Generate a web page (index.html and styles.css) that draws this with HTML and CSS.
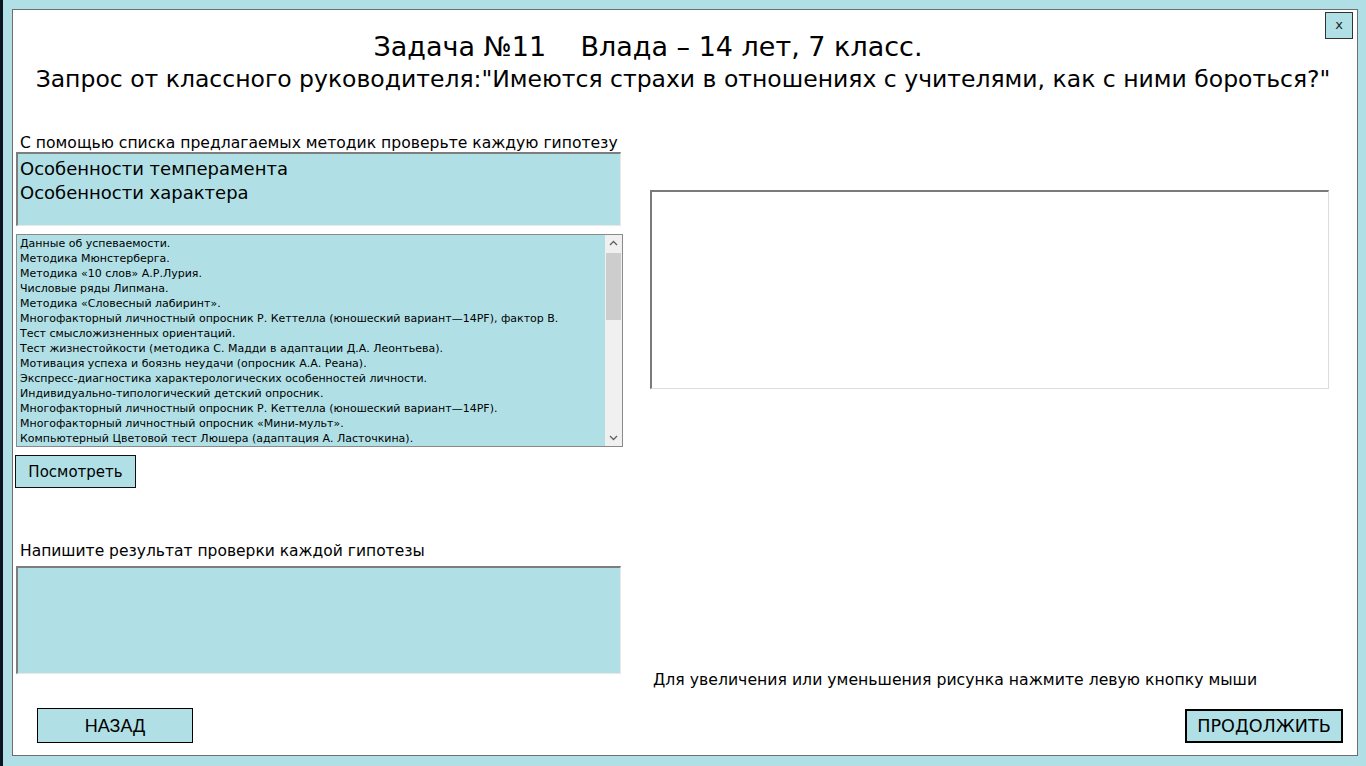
FILE: index.html
```html
<!DOCTYPE html>
<html lang="ru">
<head>
<meta charset="utf-8">
<title>Задача №11</title>
<link rel="stylesheet" href="styles.css">
</head>
<body>
<div class="window">
  <button class="close">x</button>
  <header class="head">
    <h1 class="title">Задача №11&nbsp;&nbsp;&nbsp; Влада – 14 лет, 7 класс.</h1>
    <h2 class="request">Запрос от классного руководителя:"Имеются страхи в отношениях с учителями, как с ними бороться?"</h2>
  </header>
  <main class="content">
    <section class="left">
      <p class="label">С помощью списка предлагаемых методик проверьте каждую гипотезу</p>
      <div class="hyp">Особенности темперамента<br>Особенности характера</div>
      <div class="listbox">
        <ul class="items">
          <li>Данные об успеваемости.</li>
          <li>Методика Мюнстерберга.</li>
          <li>Методика «10 слов» А.Р.Лурия.</li>
          <li>Числовые ряды Липмана.</li>
          <li>Методика «Словесный лабиринт».</li>
          <li>Многофакторный личностный опросник Р. Кеттелла (юношеский вариант—14PF), фактор В.</li>
          <li>Тест смысложизненных ориентаций.</li>
          <li>Тест жизнестойкости (методика С. Мадди в адаптации Д.А. Леонтьева).</li>
          <li>Мотивация успеха и боязнь неудачи (опросник А.А. Реана).</li>
          <li>Экспресс-диагностика характерологических особенностей личности.</li>
          <li>Индивидуально-типологический детский опросник.</li>
          <li>Многофакторный личностный опросник Р. Кеттелла (юношеский вариант—14PF).</li>
          <li>Многофакторный личностный опросник «Мини-мульт».</li>
          <li>Компьютерный Цветовой тест Люшера (адаптация А. Ласточкина).</li>
        </ul>
        <div class="scrollbar">
          <svg class="arrow" width="17" height="17" viewBox="0 0 17 17"><polyline points="5,10 8.5,6.5 12,10" fill="none" stroke="#606060" stroke-width="1.3"/></svg>
          <div class="track"><div class="thumb"></div></div>
          <svg class="arrow" width="17" height="17" viewBox="0 0 17 17"><polyline points="5,7 8.5,10.5 12,7" fill="none" stroke="#606060" stroke-width="1.3"/></svg>
        </div>
      </div>
      <button class="btn view">Посмотреть</button>
      <p class="label result-label">Напишите результат проверки каждой гипотезы</p>
      <div class="result"></div>
    </section>
    <section class="right">
      <div class="picture"></div>
      <p class="hint">Для увеличения или уменьшения рисунка нажмите левую кнопку мыши</p>
    </section>
  </main>
  <footer class="nav">
    <button class="back">НАЗАД</button>
    <button class="next">ПРОДОЛЖИТЬ</button>
  </footer>
</div>
</body>
</html>
```

FILE: styles.css
```css
* { box-sizing: border-box; }
html, body { margin: 0; height: 100%; }
body {
  background: #b0e0e6;
  border-left: 3px solid #0c1622;
  padding: 9px 8px 10px 9px;
  font-family: "DejaVu Sans", Verdana, sans-serif;
  color: #000;
  overflow: hidden;
}
.window {
  position: relative;
  height: 747px;
  background: #fff;
  border: 1px solid #6e6e6e;
}
.close {
  position: absolute;
  top: 2px;
  right: 4px;
  width: 28px;
  height: 27px;
  background: #b0e0e6;
  border: 1px solid #333;
  font: 13px "DejaVu Sans", sans-serif;
  color: #222;
  padding: 0 0 3px;
}
.head { padding-top: 22px; text-align: center; }
.title {
  margin: 0;
  font-weight: normal;
  font-size: 27px;
  line-height: 30px;
  padding-right: 74px;
}
.request {
  margin: 3px 0 0;
  font-weight: normal;
  font-size: 23.5px;
  line-height: 28px;
  white-space: nowrap;
  padding-right: 4px;
}
.content {
  display: flex;
  gap: 27px;
  padding: 42px 0 0 3px;
}
.left { width: 607px; display: flex; flex-direction: column; align-items: flex-start; }
.label { margin: 0 0 0 4px; font-size: 15.6px; line-height: 17px; white-space: nowrap; }
.hyp {
  width: 605px;
  height: 74px;
  background: #b0e0e6;
  border-style: solid;
  border-width: 2px 1px 1px 2px;
  border-color: #7d7d7d #e8e8e8 #e8e8e8 #7d7d7d;
  font-size: 18px;
  line-height: 24px;
  padding: 3px 0 0 2px;
}
.listbox {
  margin-top: 8px;
  width: 607px;
  height: 213px;
  border: 1px solid #8a8a8a;
  display: flex;
  background: #b0e0e6;
}
.items {
  flex: 1;
  list-style: none;
  margin: 0;
  padding: 1px 0 0 3px;
  font-size: 11px;
  line-height: 15px;
  overflow: hidden;
  white-space: nowrap;
}
.scrollbar {
  width: 17px;
  background: #f0f0f0;
  display: flex;
  flex-direction: column;
}
.arrow { display: block; flex: none; }
.track { flex: 1; }
.thumb { margin: 1px 1px 0; height: 67px; background: #cdcdcd; }
.btn, .back, .next {
  background: #b0e0e6;
  color: #000;
  cursor: pointer;
}
.view {
  margin-top: 8px;
  margin-left: -1px;
  width: 121px;
  height: 33px;
  border: 1px solid #111;
  font: 15px "DejaVu Sans", sans-serif;
  padding: 0;
}
.result-label { margin-top: 55px; font-size: 15.5px; }
.result {
  margin-top: 6px;
  width: 605px;
  height: 108px;
  background: #b0e0e6;
  border-style: solid;
  border-width: 2px 1px 1px 2px;
  border-color: #7d7d7d #e8e8e8 #e8e8e8 #7d7d7d;
}
.right { width: 679px; display: flex; flex-direction: column; }
.picture {
  margin-top: 55px;
  height: 199px;
  border-style: solid;
  border-width: 2px 1px 1px 2px;
  border-color: #7a7a7a #dcdcdc #dcdcdc #7a7a7a;
}
.hint { margin: 282px 0 0 3px; font-size: 15.7px; line-height: 17px; white-space: nowrap; }
.nav {
  display: flex;
  justify-content: space-between;
  align-items: flex-start;
  padding: 20px 14px 0 24px;
}
.back {
  width: 156px;
  height: 35px;
  border: 1px solid #000;
  font: 18px "Liberation Sans", Arial, sans-serif;
  padding: 2px 0 0;
}
.next {
  margin-top: 1px;
  width: 158px;
  height: 34px;
  border: 2px solid #000;
  font: 17.6px "DejaVu Sans", sans-serif;
  padding: 0;
}
```
